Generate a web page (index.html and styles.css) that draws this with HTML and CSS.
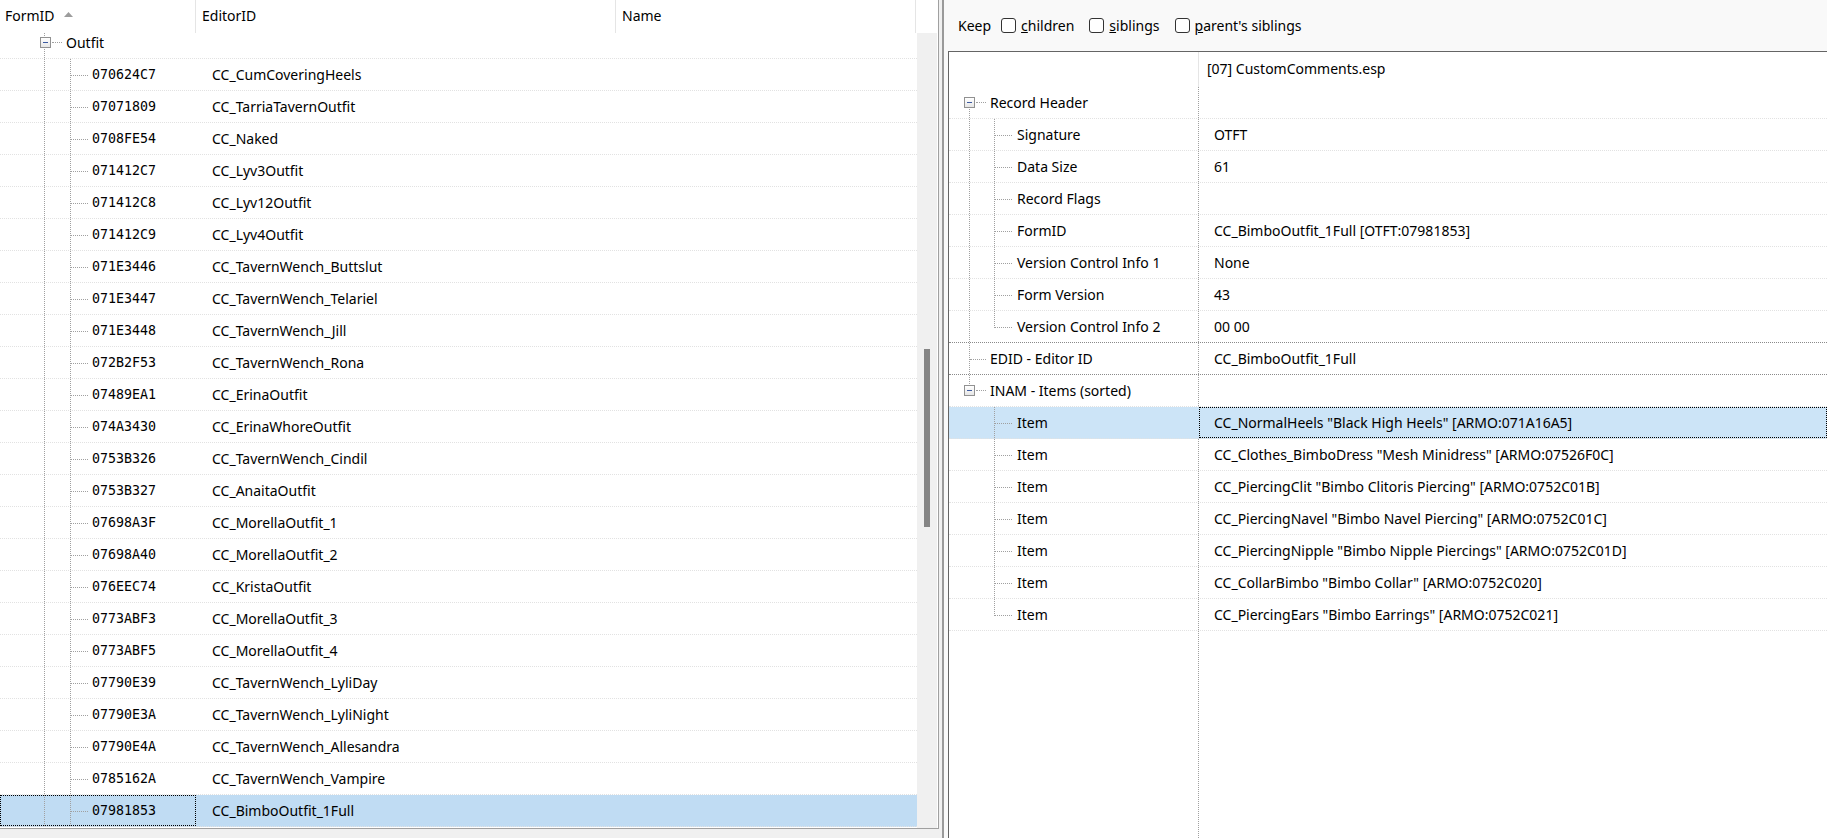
FILE: index.html
```html
<!DOCTYPE html>
<html lang="en">
<head>
  <meta charset="UTF-8">
  <title>Outfit records</title>
  <link rel="stylesheet" href="styles.css">
</head>
<body>

<!-- left: record list -->
<section class="list-panel">
  <div class="list-head">
    <div class="hcell h-form">FormID <svg class="sort" width="9" height="5" viewBox="0 0 9 5"><polygon points="0,5 4.5,0 9,5" fill="#9c9c9c"/></svg></div>
    <div class="hcell h-edid">EditorID</div>
    <div class="hcell h-name">Name</div>
    <div class="hcell h-rest"></div>
  </div>
  <div class="list-body">
    <div class="list-rows">
      <div class="rows">
        <div class="row node"><div class="cell c-form"><span class="tog"></span><span class="hc"></span>Outfit</div></div>
        <div class="row"><div class="cell c-form"><span class="br"></span><span class="fid">070624C7</span></div><div class="cell c-edid">CC_CumCoveringHeels</div></div>
        <div class="row"><div class="cell c-form"><span class="br"></span><span class="fid">07071809</span></div><div class="cell c-edid">CC_TarriaTavernOutfit</div></div>
        <div class="row"><div class="cell c-form"><span class="br"></span><span class="fid">0708FE54</span></div><div class="cell c-edid">CC_Naked</div></div>
        <div class="row"><div class="cell c-form"><span class="br"></span><span class="fid">071412C7</span></div><div class="cell c-edid">CC_Lyv3Outfit</div></div>
        <div class="row"><div class="cell c-form"><span class="br"></span><span class="fid">071412C8</span></div><div class="cell c-edid">CC_Lyv12Outfit</div></div>
        <div class="row"><div class="cell c-form"><span class="br"></span><span class="fid">071412C9</span></div><div class="cell c-edid">CC_Lyv4Outfit</div></div>
        <div class="row"><div class="cell c-form"><span class="br"></span><span class="fid">071E3446</span></div><div class="cell c-edid">CC_TavernWench_Buttslut</div></div>
        <div class="row"><div class="cell c-form"><span class="br"></span><span class="fid">071E3447</span></div><div class="cell c-edid">CC_TavernWench_Telariel</div></div>
        <div class="row"><div class="cell c-form"><span class="br"></span><span class="fid">071E3448</span></div><div class="cell c-edid">CC_TavernWench_Jill</div></div>
        <div class="row"><div class="cell c-form"><span class="br"></span><span class="fid">072B2F53</span></div><div class="cell c-edid">CC_TavernWench_Rona</div></div>
        <div class="row"><div class="cell c-form"><span class="br"></span><span class="fid">07489EA1</span></div><div class="cell c-edid">CC_ErinaOutfit</div></div>
        <div class="row"><div class="cell c-form"><span class="br"></span><span class="fid">074A3430</span></div><div class="cell c-edid">CC_ErinaWhoreOutfit</div></div>
        <div class="row"><div class="cell c-form"><span class="br"></span><span class="fid">0753B326</span></div><div class="cell c-edid">CC_TavernWench_Cindil</div></div>
        <div class="row"><div class="cell c-form"><span class="br"></span><span class="fid">0753B327</span></div><div class="cell c-edid">CC_AnaitaOutfit</div></div>
        <div class="row"><div class="cell c-form"><span class="br"></span><span class="fid">07698A3F</span></div><div class="cell c-edid">CC_MorellaOutfit_1</div></div>
        <div class="row"><div class="cell c-form"><span class="br"></span><span class="fid">07698A40</span></div><div class="cell c-edid">CC_MorellaOutfit_2</div></div>
        <div class="row"><div class="cell c-form"><span class="br"></span><span class="fid">076EEC74</span></div><div class="cell c-edid">CC_KristaOutfit</div></div>
        <div class="row"><div class="cell c-form"><span class="br"></span><span class="fid">0773ABF3</span></div><div class="cell c-edid">CC_MorellaOutfit_3</div></div>
        <div class="row"><div class="cell c-form"><span class="br"></span><span class="fid">0773ABF5</span></div><div class="cell c-edid">CC_MorellaOutfit_4</div></div>
        <div class="row"><div class="cell c-form"><span class="br"></span><span class="fid">07790E39</span></div><div class="cell c-edid">CC_TavernWench_LyliDay</div></div>
        <div class="row"><div class="cell c-form"><span class="br"></span><span class="fid">07790E3A</span></div><div class="cell c-edid">CC_TavernWench_LyliNight</div></div>
        <div class="row"><div class="cell c-form"><span class="br"></span><span class="fid">07790E4A</span></div><div class="cell c-edid">CC_TavernWench_Allesandra</div></div>
        <div class="row"><div class="cell c-form"><span class="br"></span><span class="fid">0785162A</span></div><div class="cell c-edid">CC_TavernWench_Vampire</div></div>
        <div class="row sel"><div class="cell c-form"><span class="br"></span><span class="fid">07981853</span></div><div class="cell c-edid">CC_BimboOutfit_1Full</div></div>
      </div>
    </div>
    <div class="vscroll"><div class="thumb"></div></div>
  </div>
</section>

<div class="splitter"></div>

<!-- right: record view -->
<section class="view-panel">
  <div class="toolbar">
    <span class="keep">Keep</span>
    <label class="chk"><span class="box"></span><u>c</u>hildren</label>
    <label class="chk"><span class="box"></span><u>s</u>iblings</label>
    <label class="chk"><span class="box"></span><u>p</u>arent's siblings</label>
  </div>
  <div class="tree">
    <div class="tree-head">
      <div class="th-key"></div>
      <div class="th-val">[07] CustomComments.esp</div>
    </div>
    <div class="tree-body">
      <div class="trow"><div class="k k-open"><span class="tog"></span><span class="hc"></span>Record Header</div><div class="v"></div></div>
      <div class="trow"><div class="k k-sub"><span class="br"></span>Signature</div><div class="v">OTFT</div></div>
      <div class="trow"><div class="k k-sub"><span class="br"></span>Data Size</div><div class="v">61</div></div>
      <div class="trow"><div class="k k-sub"><span class="br"></span>Record Flags</div><div class="v"></div></div>
      <div class="trow"><div class="k k-sub"><span class="br"></span>FormID</div><div class="v">CC_BimboOutfit_1Full [OTFT:07981853]</div></div>
      <div class="trow"><div class="k k-sub"><span class="br"></span>Version Control Info 1</div><div class="v">None</div></div>
      <div class="trow"><div class="k k-sub"><span class="br"></span>Form Version</div><div class="v">43</div></div>
      <div class="trow top-sep"><div class="k k-sub"><span class="br end"></span>Version Control Info 2</div><div class="v">00 00</div></div>
      <div class="trow top-sep"><div class="k k-leaf"><span class="br"></span>EDID - Editor ID</div><div class="v">CC_BimboOutfit_1Full</div></div>
      <div class="trow"><div class="k k-last"><span class="tog"></span><span class="hc"></span>INAM - Items (sorted)</div><div class="v"></div></div>
      <div class="trow sel"><div class="k k-item"><span class="br"></span>Item</div><div class="v">CC_NormalHeels "Black High Heels" [ARMO:071A16A5]</div></div>
      <div class="trow"><div class="k k-item"><span class="br"></span>Item</div><div class="v">CC_Clothes_BimboDress "Mesh Minidress" [ARMO:07526F0C]</div></div>
      <div class="trow"><div class="k k-item"><span class="br"></span>Item</div><div class="v">CC_PiercingClit "Bimbo Clitoris Piercing" [ARMO:0752C01B]</div></div>
      <div class="trow"><div class="k k-item"><span class="br"></span>Item</div><div class="v">CC_PiercingNavel "Bimbo Navel Piercing" [ARMO:0752C01C]</div></div>
      <div class="trow"><div class="k k-item"><span class="br"></span>Item</div><div class="v">CC_PiercingNipple "Bimbo Nipple Piercings" [ARMO:0752C01D]</div></div>
      <div class="trow"><div class="k k-item"><span class="br"></span>Item</div><div class="v">CC_CollarBimbo "Bimbo Collar" [ARMO:0752C020]</div></div>
      <div class="trow"><div class="k k-item"><span class="br end"></span>Item</div><div class="v">CC_PiercingEars "Bimbo Earrings" [ARMO:0752C021]</div></div>
    </div>
  </div>
</section>

</body>
</html>
```

FILE: styles.css
```css
:root {
  --line: #a0a0a0;
  --row-sep: #e2e2e2;
  --sel-left: #c0dcf3;
  --sel-right: #cce4f7;
  --window: #f0f0f0;
}
* { box-sizing: border-box; }
html, body { height: 100%; }
body {
  margin: 0;
  display: flex;
  height: 838px;
  overflow: hidden;
  background: var(--window);
  font-family: "Noto Sans", "Open Sans", sans-serif;
  font-size: 14px;
  color: #000;
}

/* ---------- left list ---------- */
.list-panel {
  width: 939px;
  height: 829px;
  flex: none;
  display: flex;
  flex-direction: column;
  background: #fff;
  border-right: 1px solid var(--line);
  border-bottom: 1px solid var(--line);
}
.list-head {
  display: flex;
  height: 33px;
  flex: none;
}
.hcell {
  display: flex;
  align-items: center;
  padding: 0 6px 3px;
  border-right: 1px solid #e5e5e5;
}
.h-form { width: 196px; padding-left: 5px; }
.h-form .sort { margin-left: 9px; margin-bottom: 2px; }
.h-edid { width: 420px; }
.h-name { width: 300px; }
.h-rest { flex: 1; border-right: none; }

.list-body {
  flex: 1;
  display: flex;
  min-height: 0;
}
.list-rows {
  width: 917px;
  overflow: hidden;
}
.rows { margin-top: -6px; }
.row {
  display: flex;
  height: 32px;
  border-bottom: 1px dotted var(--row-sep);
}
.row.sel { background: var(--sel-left); }
.cell {
  display: flex;
  align-items: center;
  white-space: nowrap;
}
.c-form {
  width: 196px;
  padding-left: 70px;
  /* level 0 guide line */
  background: repeating-linear-gradient(to bottom, var(--line) 0 1px, transparent 1px 2px) 44px 0 / 1px 100% no-repeat;
}
.row.sel .c-form { outline: 1px dotted #000; outline-offset: -1px; }
.c-edid { width: 420px; padding-left: 16px; }
.row.node .c-form { padding-left: 40px; }
.fid {
  font-family: "DejaVu Sans Mono", "Liberation Mono", monospace;
  font-size: 13.3px;
}

/* tree bits shared by both trees */
.tog {
  position: relative;
  width: 11px;
  height: 11px;
  flex: none;
  border: 1px solid #919191;
  background: linear-gradient(#fff, #e6e6e6);
}
.tog::before {
  content: "";
  position: absolute;
  left: 2px;
  top: 4px;
  width: 5px;
  height: 1px;
  background: #3c5aa0;
}
.hc {
  width: 10px;
  margin: 0 4px 0 1px;
  border-top: 1px dotted var(--line);
}
.br {
  align-self: stretch;
  width: 22px;
  flex: none;
  border-left: 1px dotted var(--line);
}
.br::after {
  content: "";
  display: block;
  width: 17px;
  height: 16px;
  border-bottom: 1px dotted var(--line);
}
.br.end { border-left: none; }
.br.end::after { border-left: 1px dotted var(--line); }

.vscroll {
  width: 20px;
  background: var(--window);
  padding: 316px 0 0 7px;
}
.thumb {
  width: 6px;
  height: 178px;
  background: #858585;
}

.splitter {
  width: 5px;
  flex: none;
  background: var(--window);
  border-right: 2px solid #9a9a9a;
}

/* ---------- right view ---------- */
.view-panel {
  flex: 1;
  display: flex;
  flex-direction: column;
  background: #f9f9f9;
  padding-left: 4px;
}
.toolbar {
  height: 51px;
  flex: none;
  display: flex;
  align-items: center;
  padding-left: 10px;
}
.keep { margin-right: 10px; }
.chk {
  display: flex;
  align-items: center;
  margin-right: 15px;
}
.chk .box {
  width: 15px;
  height: 15px;
  margin-right: 5px;
  border: 1px solid #333;
  border-radius: 3px;
  background: #fff;
}

.tree {
  flex: 1;
  display: flex;
  flex-direction: column;
  background: #fff;
  border-top: 1px solid #646464;
  border-left: 1px solid #646464;
}
.tree-head {
  display: flex;
  height: 35px;
  flex: none;
}
.th-key { width: 250px; border-right: 1px solid #e5e5e5; }
.th-val { padding: 0 0 0 8px; display: flex; align-items: center; padding-bottom: 3px; }

.tree-body {
  flex: 1;
  background: repeating-linear-gradient(to bottom, var(--line) 0 1px, transparent 1px 2px) 249px 0 / 1px 100% no-repeat;
}
.trow {
  display: flex;
  height: 32px;
  border-bottom: 1px dotted var(--row-sep);
}
.trow.top-sep { border-bottom-color: #8a8a8a; }
.trow.sel { background: var(--sel-right); }
.k, .v {
  display: flex;
  align-items: center;
  white-space: nowrap;
}
.k { width: 250px; flex: none; padding-left: 45px; }
.k .br { width: 23px; }
.v { flex: 1; padding-left: 15px; }
.trow.sel .v { outline: 1px dotted #000; outline-offset: -1px; }

.k-open, .k-last { padding-left: 15px; }
.k-open { background: repeating-linear-gradient(to bottom, var(--line) 0 1px, transparent 1px 2px) 20px 100% / 1px 50% no-repeat; }
.k-last { background: repeating-linear-gradient(to bottom, var(--line) 0 1px, transparent 1px 2px) 20px 0 / 1px 50% no-repeat; }
.k-sub { background: repeating-linear-gradient(to bottom, var(--line) 0 1px, transparent 1px 2px) 20px 0 / 1px 100% no-repeat; }
.k-leaf { padding-left: 20px; }
.k-leaf .br { width: 21px; }
.k-leaf .br::after { width: 16px; }
```
